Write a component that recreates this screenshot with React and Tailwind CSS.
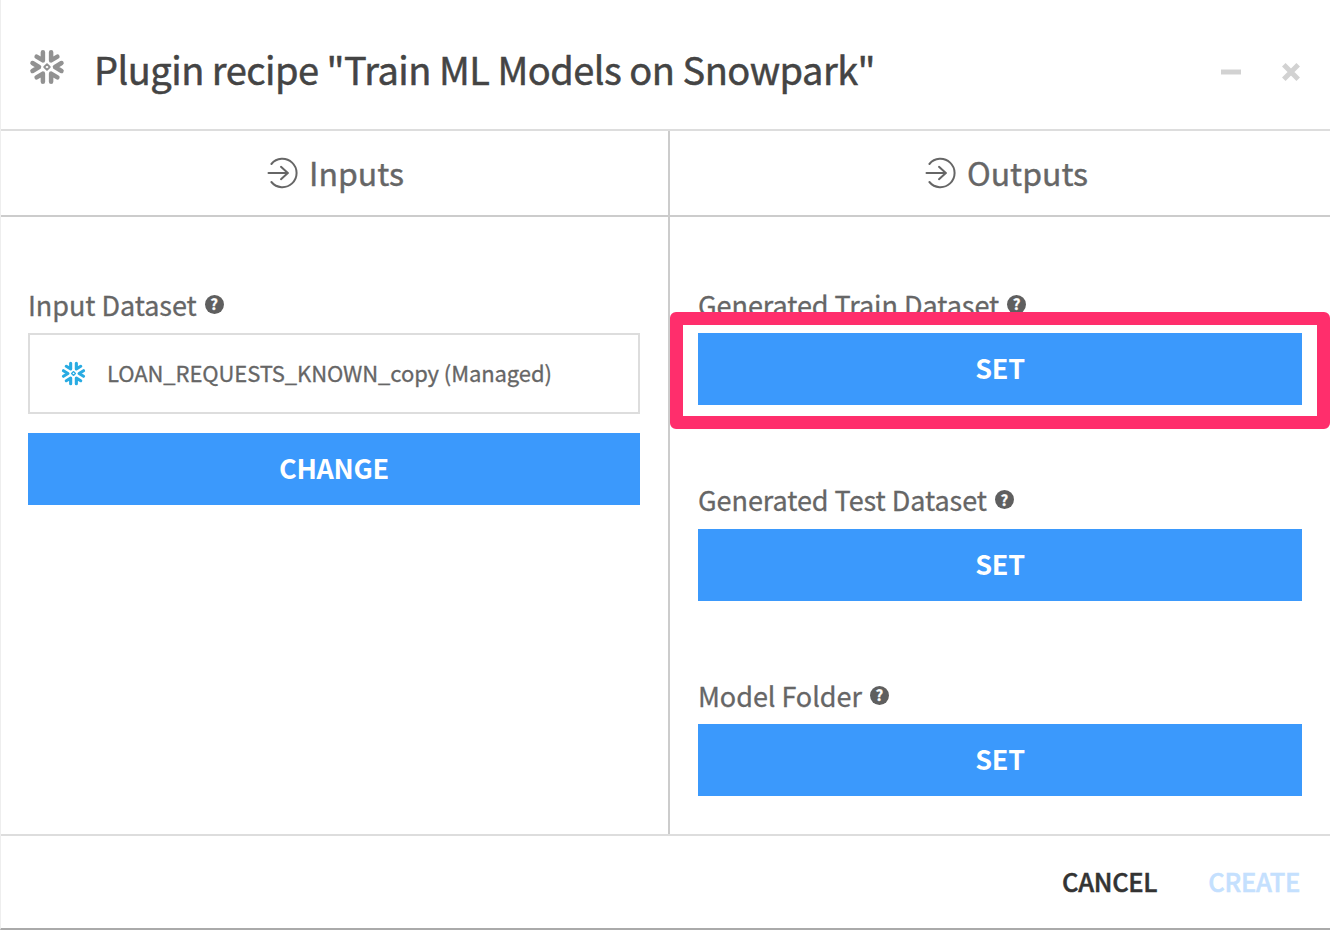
import React from "react";

const sans = "font-['Noto_Sans_CJK_SC','Open_Sans',sans-serif]";

function Snowflake({ className, size }) {
  return (
    <svg className={className} width={size} height={size} viewBox="0 0 36 36" fill="none" stroke="currentColor" strokeWidth="4.5" strokeLinecap="round" strokeLinejoin="round">
      <path d="M13.9 3.2V11.4L7.6 7.6" />
      <path d="M22.1 3.2V11.4L28.4 7.6" />
      <path d="M13.9 32.8V24.6L7.6 28.4" />
      <path d="M22.1 32.8V24.6L28.4 28.4" />
      <path d="M3.5 14L10 18L3.5 22" />
      <path d="M32.5 14L26 18L32.5 22" />
      <path d="M18 15.2L20.8 18L18 20.8L15.2 18Z" strokeWidth="1.8" />
    </svg>
  );
}

function ArrowCircle() {
  return (
    <svg className="shrink-0" width="32" height="32" viewBox="0 0 32 32" fill="none" stroke="currentColor" strokeWidth="2" strokeLinecap="round" strokeLinejoin="round">
      <path d="M4.4 7A14.2 14.2 0 1 1 4.4 25" />
      <path d="M1.5 16H20.5" />
      <path d="M14 9.8L20.8 16L14 22.2" />
    </svg>
  );
}

function Help() {
  return (
    <span className="flex size-[19px] shrink-0 items-center justify-center rounded-full bg-[#5f5f5f] pb-px text-[15px] leading-none font-bold text-white">
      ?
    </span>
  );
}

function Label({ children }) {
  return (
    <div className="flex h-[56px] items-center gap-2 pb-[2px] text-[27px] leading-none tracking-[-0.05px] whitespace-nowrap text-[#666] [-webkit-text-stroke:0.3px]">
      <span>{children}</span>
      <Help />
    </div>
  );
}

function Button({ children }) {
  return (
    <button className="flex h-[72px] w-full items-center justify-center bg-[#3b99fc] pb-[3px] text-[27px] leading-none font-bold tracking-[-0.3px] text-white">
      {children}
    </button>
  );
}

function ColumnTitle({ children }) {
  return (
    <div className="flex h-[86px] items-center justify-center gap-[10px] border-b-2 border-[#ccc] text-[32px] leading-none text-[#666] [-webkit-text-stroke:0.4px]">
      <ArrowCircle />
      <span className="pb-[3px]">{children}</span>
    </div>
  );
}

export default function App() {
  return (
    <div className={`flex h-[930px] w-[1330px] flex-col overflow-hidden border-b-2 border-l border-b-[#aaa] border-l-[#eee] bg-white ${sans}`}>
      <header className="flex h-[131px] shrink-0 items-center border-b-2 border-[#ddd] pt-[5px] pr-[29px] pl-[28px]">
        <Snowflake size={36} className="shrink-0 text-[#929292]" />
        <h1 className="ml-[29px] pt-[3px] text-[38px] leading-none tracking-[-0.52px] whitespace-nowrap text-[#444] [-webkit-text-stroke:0.5px]">Plugin recipe "Train ML Models on Snowpark"</h1>
        <div className="ml-auto flex items-center gap-[40px] pt-[9px] text-[#d2d2d2]">
          <svg width="20" height="20" viewBox="0 0 20 20"><path d="M0 7.5H20V12.5H0Z" fill="currentColor" /></svg>
          <svg width="20" height="20" viewBox="0 0 20 20"><path d="M2.8 2.8L17.2 17.2M17.2 2.8L2.8 17.2" stroke="currentColor" strokeWidth="5" /></svg>
        </div>
      </header>
      <main className="flex h-[703px] shrink-0">
        <section className="w-[669px] border-r-2 border-[#ccc]">
          <div className="[&>div]:pl-[2px]"><ColumnTitle>Inputs</ColumnTitle></div>
          <div className="pt-[60px] pr-[28px] pl-[27px]">
            <Label>Input Dataset</Label>
            <div className="flex h-[81px] items-center border-2 border-[#ddd] pl-[31px] text-[22px] leading-none tracking-[-0.09px] text-[#666] [-webkit-text-stroke:0.3px]">
              <Snowflake size={25} className="shrink-0 text-[#29abe2]" />
              <span className="ml-[21px] pb-1">LOAN_REQUESTS_KNOWN_copy (Managed)</span>
            </div>
            <div className="mt-[19px]"><Button>CHANGE</Button></div>
          </div>
        </section>
        <section className="flex-1">
          <div className="[&>div]:pl-[13px]"><ColumnTitle>Outputs</ColumnTitle></div>
          <div className="flex flex-col gap-[67.7px] px-[28px] pt-[60px]">
            <div>
              <Label>Generated Train Dataset</Label>
              <div className="relative">
                <Button>SET</Button>
                <div className="absolute -top-[21px] -right-[28px] -bottom-[24px] -left-[28px] rounded-md border-[13px] border-[#ff2e6c]" />
              </div>
            </div>
            <div>
              <Label>Generated Test Dataset</Label>
              <Button>SET</Button>
            </div>
            <div>
              <Label>Model Folder</Label>
              <Button>SET</Button>
            </div>
          </div>
        </section>
      </main>
      <footer className="flex flex-1 items-center justify-end gap-[51px] border-t-2 border-[#ddd] pr-[30px] pb-[2px] text-[25.5px] leading-none font-medium tracking-[-0.3px] [-webkit-text-stroke:0.5px]">
        <button className="text-[#333]">CANCEL</button>
        <button className="text-[#c4e0fe]">CREATE</button>
      </footer>
    </div>
  );
}
